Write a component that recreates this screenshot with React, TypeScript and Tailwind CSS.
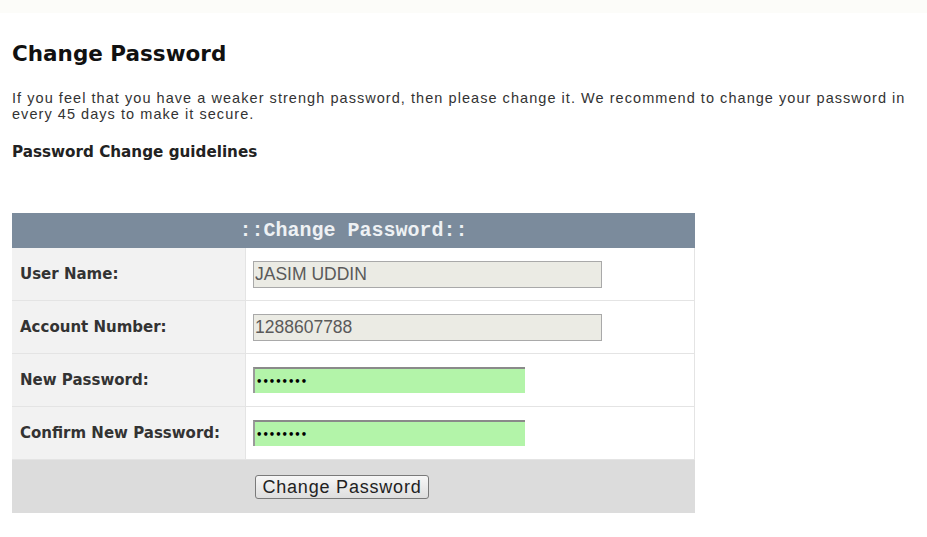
import React from 'react';

interface FieldRow {
  label: string;
  value: string;
  kind: 'readonly' | 'password';
}

const rows: FieldRow[] = [
  { label: 'User Name:', value: 'JASIM UDDIN', kind: 'readonly' },
  { label: 'Account Number:', value: '1288607788', kind: 'readonly' },
  { label: 'New Password:', value: '••••••••', kind: 'password' },
  { label: 'Confirm New Password:', value: '••••••••', kind: 'password' },
];

const ReadonlyBox: React.FC<{ value: string }> = ({ value }) => (
  <div className="w-[349px] h-[27px] bg-[#ebebe4] border border-[#a9a9a9] flex items-center px-[1px] text-[17.5px] text-[#5a5a5a] font-['Liberation_Sans',sans-serif]">
    {value}
  </div>
);

const PasswordBox: React.FC<{ value: string }> = ({ value }) => (
  <div className="w-[272px] h-[26px] bg-[#b3f4a9] border-t-2 border-l-2 border-t-[#8a8a8a] border-l-[#9a9a9a] flex items-center pl-[1px] text-[10px] font-bold text-black">
    {value}
  </div>
);

export default function App() {
  return (
    <div className="min-h-screen bg-white font-['DejaVu_Sans',sans-serif]">
      <div className="h-[13px] bg-[#fcfcf9]" />
      <div className="px-3">
        <h1 className="mt-[29px] text-[21.5px] leading-[24px] font-bold text-[#111]">Change Password</h1>
        <p className="mt-[24px] text-[14.5px] leading-[16px] tracking-[1.05px] text-[#333] font-['Liberation_Sans',sans-serif]">
          If you feel that you have a weaker strengh password, then please change it. We recommend to change your password in
          <br />
          every 45 days to make it secure.
        </p>
        <p className="mt-[21px] text-[15.2px] leading-[18px] font-bold text-[#222]">Password Change guidelines</p>

        <div className="mt-[52px] w-[683px]">
          <div className="h-[35px] bg-[#7b8b9c] flex items-center justify-center text-[20px] font-bold text-[#eef1f4] font-['Liberation_Mono',monospace]">
            ::Change Password::
          </div>
          {rows.map((row) => (
            <div key={row.label} className="grid grid-cols-[234px_1fr] h-[53px] border-b border-[#e4e4e4]">
              <div className="bg-[#f2f2f2] border-r border-[#e4e4e4] flex items-center pl-2 text-[15px] font-bold text-[#333]">
                {row.label}
              </div>
              <div className="bg-white border-r border-[#e4e4e4] flex items-center pl-[7px]">
                {row.kind === 'readonly' ? <ReadonlyBox value={row.value} /> : <PasswordBox value={row.value} />}
              </div>
            </div>
          ))}
          <div className="grid grid-cols-[234px_1fr] h-[53px] bg-[#dcdcdc]">
            <div />
            <div className="flex items-center pl-[9px]">
              <button className="w-[174px] h-[24px] rounded-[3px] border border-[#7a7a7a] bg-gradient-to-b from-[#f7f7f7] to-[#dedede] text-[18px] leading-none tracking-[0.8px] text-[#222] font-['Liberation_Sans',sans-serif]">
                Change Password
              </button>
            </div>
          </div>
        </div>
      </div>
    </div>
  );
}
